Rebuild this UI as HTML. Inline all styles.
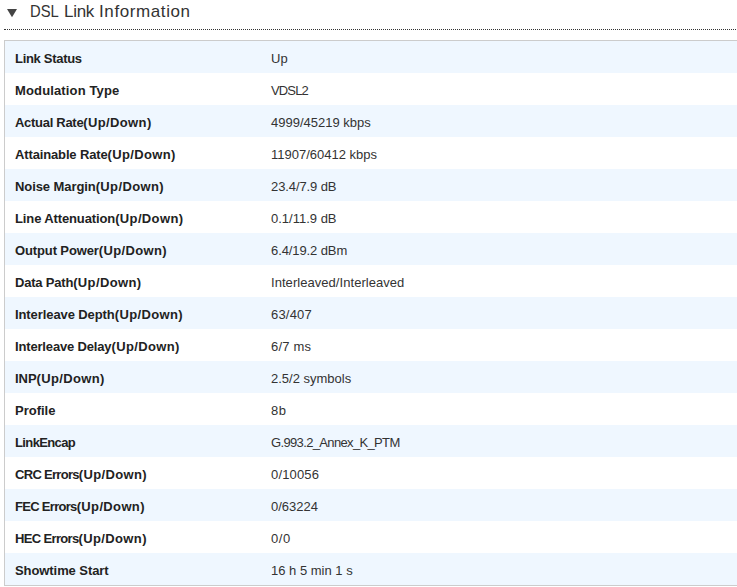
<!DOCTYPE html>
<html><head><meta charset="utf-8">
<style>
html,body{margin:0;padding:0;background:#fff;width:737px;height:587px;overflow:hidden;}
body{font-family:"Liberation Sans",sans-serif;position:relative;}
.tri{position:absolute;left:0;top:0;}
.title{position:absolute;left:30px;top:1px;font-size:17px;color:#333;line-height:22px;white-space:nowrap;}
.w{position:absolute;top:0;display:inline-block;}
.dots{position:absolute;left:4px;top:29px;width:760px;height:0;border-top:1px dotted #333;}
.tbl{position:absolute;left:4px;top:40px;width:760px;border-top:1px solid #ccc;border-left:1px solid #ccc;border-bottom:1px solid #ccc;}
.row{height:32px;position:relative;white-space:nowrap;}
.row:nth-child(odd){background:#eff7ff;}
.k{position:absolute;left:10px;top:2px;line-height:32px;font-size:13px;font-weight:bold;color:#222;}
.ud{letter-spacing:0.36px;}
.v{position:absolute;left:266px;top:2px;line-height:32px;font-size:13px;color:#333;}
</style></head><body>
<svg class="tri" width="24" height="24"><polygon points="7,9 17,9 12,17.3" fill="#444"/></svg>
<div class="title"><span class="w" style="left:0;transform:scaleX(0.87);transform-origin:0 0;letter-spacing:0">DSL</span><span class="w" style="left:34px;letter-spacing:-0.3px">Link</span><span class="w" style="left:69px;letter-spacing:0.6px">Information</span></div>
<div class="dots"></div>
<div class="tbl">
<div class="row"><span class="k" style="letter-spacing:-0.3px">Link Status</span><span class="v">Up</span></div>
<div class="row"><span class="k" style="letter-spacing:0.14px">Modulation Type</span><span class="v" style="letter-spacing:-0.85px">VDSL2</span></div>
<div class="row"><span class="k"><span style="letter-spacing:-0.29px">Actual Rate</span><span class="ud">(Up/Down)</span></span><span class="v">4999/45219 kbps</span></div>
<div class="row"><span class="k"><span style="letter-spacing:-0.14px">Attainable Rate</span><span class="ud">(Up/Down)</span></span><span class="v">11907/60412 kbps</span></div>
<div class="row"><span class="k"><span style="letter-spacing:-0.08px">Noise Margin</span><span class="ud">(Up/Down)</span></span><span class="v" style="letter-spacing:-0.1px">23.4/7.9 dB</span></div>
<div class="row"><span class="k"><span style="letter-spacing:-0.12px">Line Attenuation</span><span class="ud">(Up/Down)</span></span><span class="v">0.1/11.9 dB</span></div>
<div class="row"><span class="k"><span style="letter-spacing:-0.12px">Output Power</span><span class="ud">(Up/Down)</span></span><span class="v" style="letter-spacing:-0.1px">6.4/19.2 dBm</span></div>
<div class="row"><span class="k"><span style="letter-spacing:-0.2px">Data Path</span><span class="ud">(Up/Down)</span></span><span class="v" style="letter-spacing:0.05px">Interleaved/Interleaved</span></div>
<div class="row"><span class="k"><span style="letter-spacing:-0.09px">Interleave Depth</span><span class="ud">(Up/Down)</span></span><span class="v" style="letter-spacing:0.2px">63/407</span></div>
<div class="row"><span class="k"><span style="letter-spacing:-0.16px">Interleave Delay</span><span class="ud">(Up/Down)</span></span><span class="v" style="letter-spacing:0.2px">6/7 ms</span></div>
<div class="row"><span class="k"><span style="letter-spacing:-0.06px">INP</span><span class="ud">(Up/Down)</span></span><span class="v">2.5/2 symbols</span></div>
<div class="row"><span class="k">Profile</span><span class="v" style="letter-spacing:0.5px">8b</span></div>
<div class="row"><span class="k" style="letter-spacing:-0.62px">LinkEncap</span><span class="v" style="letter-spacing:-0.65px">G.993.2_Annex_K_PTM</span></div>
<div class="row"><span class="k"><span style="letter-spacing:-0.7px">CRC Errors</span><span class="ud">(Up/Down)</span></span><span class="v" style="letter-spacing:0.15px">0/10056</span></div>
<div class="row"><span class="k"><span style="letter-spacing:-0.7px">FEC Errors</span><span class="ud">(Up/Down)</span></span><span class="v">0/63224</span></div>
<div class="row"><span class="k"><span style="letter-spacing:-0.65px">HEC Errors</span><span class="ud">(Up/Down)</span></span><span class="v" style="letter-spacing:0.6px">0/0</span></div>
<div class="row"><span class="k" style="letter-spacing:-0.08px">Showtime Start</span><span class="v">16 h 5 min 1 s</span></div>
</div>
</body></html>
